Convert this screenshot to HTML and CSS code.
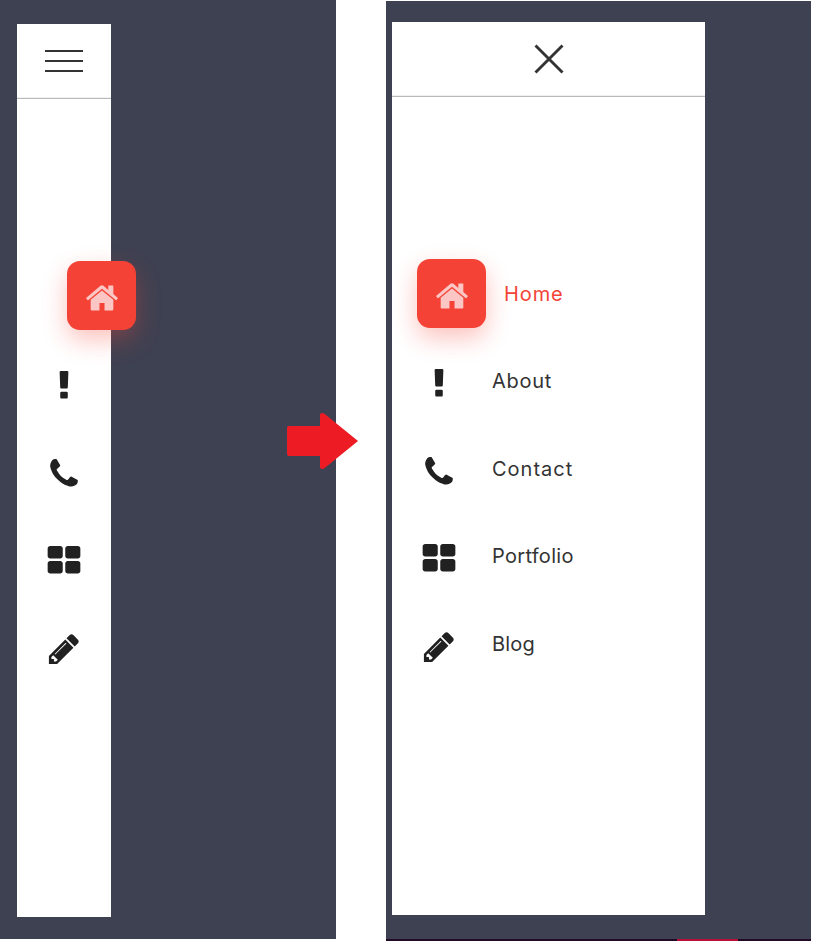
FILE: index.html
```html
<!DOCTYPE html>
<html lang="en">
<head>
<meta charset="utf-8">
<title>Sidebar menu</title>
<link rel="stylesheet" href="styles.css">
</head>
<body>
<svg class="sprite" aria-hidden="true">
  <symbol id="home" viewBox="0 0 1792 1792"><path d="M1472 992v480q0 26-19 45t-45 19h-384v-384h-256v384h-384q-26 0-45-19t-19-45v-480q0-1 .5-3t.5-3l575-474 575 474q1 2 1 6zm223-69l-62 74q-8 9-21 11h-3q-13 0-21-7l-692-577-692 577q-12 8-24 7-13-2-21-11l-62-74q-8-10-7-23.5t11-21.5l719-599q32-26 76-26t76 26l244 204v-195q0-14 9-23t23-9h192q14 0 23 9t9 23v408l219 182q10 8 11 21.5t-7 23.5z"/></symbol>
  <symbol id="about" viewBox="0 0 1792 1792"><path d="M1088 1248v224q0 26-19 45t-45 19h-256q-26 0-45-19t-19-45v-224q0-26 19-45t45-19h256q26 0 45 19t19 45zm30-1056l-28 768q-1 26-20.5 45t-45.5 19h-256q-26 0-45.5-19t-20.5-45l-28-768q-1-26 17.5-45t44.5-19h320q26 0 44.5 19t17.5 45z"/></symbol>
  <symbol id="phone" viewBox="0 0 1792 1792"><path d="M1600 1240q0 27-10 70.5t-21 68.5q-21 50-122 106-94 51-186 51-27 0-53-3.5t-57.5-12.5-47-14.5-55.5-20.5-49-18q-98-35-175-83-127-79-264-216t-216-264q-48-77-83-175-3-9-18-49t-20.5-55.5-14.5-47-12.5-57.5-3.5-53q0-92 51-186 56-101 106-122 25-11 68.5-21t70.5-10q14 0 21 3 18 6 53 76 11 19 30 54t35 63.5 31 53.5q3 4 17.5 25t21.5 35.5 7 28.5q0 20-28.5 50t-62 55-62 53-28.5 46q0 9 5 22.5t8.5 20.5 14 24 11.5 19q76 137 174 235t235 174q2 1 19 11.5t24 14 20.5 8.5 22.5 5q18 0 46-28.5t53-62 55-62 50-28.5q14 0 28.5 7t35.5 21.5 25 17.5q25 15 53.5 31t63.5 35 54 30q70 35 76 53 3 7 3 21z"/></symbol>
  <symbol id="grid" viewBox="0 0 1792 1792"><path d="M832 1024v384q0 52-38 90t-90 38h-512q-52 0-90-38t-38-90v-384q0-52 38-90t90-38h512q52 0 90 38t38 90zm0-768v384q0 52-38 90t-90 38h-512q-52 0-90-38t-38-90v-384q0-52 38-90t90-38h512q52 0 90 38t38 90zm896 768v384q0 52-38 90t-90 38h-512q-52 0-90-38t-38-90v-384q0-52 38-90t90-38h512q52 0 90 38t38 90zm0-768v384q0 52-38 90t-90 38h-512q-52 0-90-38t-38-90v-384q0-52 38-90t90-38h512q52 0 90 38t38 90z"/></symbol>
  <symbol id="pencil" viewBox="0 0 1792 1792"><path d="M491 1536l91-91-235-235-91 91v107h128v128h107zm523-928q0-22-22-22-10 0-17 7l-542 542q-7 7-7 17 0 22 22 22 10 0 17-7l542-542q7-7 7-17zm-54-192l416 416-832 832h-416v-416zm683 96q0 53-37 90l-166 166-416-416 166-165q36-38 90-38 53 0 91 38l235 234q37 39 37 91z"/></symbol>
</svg>
<main class="board">
  <section class="stage stage-closed">
    <nav class="panel narrow">
      <div class="head"><div class="burger"><span></span><span></span><span></span></div></div>
      <ul class="menu">
        <li class="active"><span class="cell"><span class="tile"><svg class="icon"><use href="#home"/></svg></span></span></li>
        <li><span class="cell"><svg class="icon"><use href="#about"/></svg></span></li>
        <li><span class="cell"><svg class="icon"><use href="#phone"/></svg></span></li>
        <li><span class="cell"><svg class="icon"><use href="#grid"/></svg></span></li>
        <li><span class="cell"><svg class="icon"><use href="#pencil"/></svg></span></li>
      </ul>
    </nav>
  </section>
  <section class="stage stage-open">
    <nav class="panel wide">
      <div class="head"><svg class="close" viewBox="0 0 30 30"><path d="M1.5 1.5l27 27M28.5 1.5l-27 27"/></svg></div>
      <ul class="menu">
        <li class="active"><span class="cell"><span class="tile"><svg class="icon"><use href="#home"/></svg></span></span><span class="label home">Home</span></li>
        <li><span class="cell"><svg class="icon"><use href="#about"/></svg></span><span class="label about">About</span></li>
        <li><span class="cell"><svg class="icon"><use href="#phone"/></svg></span><span class="label contact">Contact</span></li>
        <li><span class="cell"><svg class="icon"><use href="#grid"/></svg></span><span class="label portfolio">Portfolio</span></li>
        <li><span class="cell"><svg class="icon"><use href="#pencil"/></svg></span><span class="label blog">Blog</span></li>
      </ul>
    </nav>
    <div class="strip"><span></span></div>
  </section>
  <svg class="arrow" viewBox="0 0 72 58"><path d="M2 14h31V3q0-2 2-2 2 0 4 2L71 29 39 55q-2 2-4 2-2 0-2-2V44H2q-2 0-2-2V16q0-2 2-2z"/></svg>
</main>
</body>
</html>
```
FILE: styles.css
```css
* { box-sizing: border-box; }
body { margin: 0; background: #fff; font-family: Inter, "Liberation Sans", sans-serif; }
.sprite { display: none; }
.board { position: relative; display: flex; gap: 50px; width: 813px; height: 941px; overflow: hidden; }
.stage { background: #3e4152; }
.stage-closed { width: 336px; height: 939px; padding: 24px 0 0 17px; }
.stage-open { width: 425px; height: 940px; margin-top: 1px; padding: 21px 0 0 6px; display: flex; flex-direction: column; justify-content: space-between; }
.panel { height: 893px; background: #fff; }
.narrow { width: 94px; }
.wide { width: 313px; }
.head { height: 75px; display: flex; align-items: center; justify-content: center; border-bottom: 1px solid #bababa; box-shadow: inset 0 -1px #f0f0f0; }
.burger { width: 38px; display: grid; gap: 8px; }
.burger span { height: 2px; background: #333; }
.close { width: 30px; height: 30px; fill: none; stroke: #333; stroke-width: 2.9; }
.menu { list-style: none; margin: 0; padding: 156px 0 0; }
.menu li { height: 87.5px; display: flex; align-items: center; }
.cell { flex: none; width: 94px; display: flex; justify-content: center; }
.icon { display: block; width: 36px; height: 36px; padding: .4px; fill: #212121; }
.tile { flex: none; width: 69px; height: 69px; padding-top: 6px; margin-bottom: 7px; display: flex; align-items: center; justify-content: center; border-radius: 13px; background: #f44336; box-shadow: 0 10px 25px rgba(244, 67, 54, .32); }
.tile .icon { fill: #fbc6c3; }
.narrow .active .cell { padding-left: 75px; }
.wide .active .cell { padding-left: 25px; }
.label { font-size: 20px; font-weight: 400; line-height: 30px; color: #333; margin: 0 0 6px 6px; }
.wide .label.home { margin: 0 0 5px 18px; color: #f44336; letter-spacing: .9px; }
.about { letter-spacing: .7px; }
.contact { letter-spacing: 1px; }
.portfolio { letter-spacing: .3px; }
.blog { letter-spacing: .2px; }
.strip { height: 2px; margin-left: -6px; padding-left: 291px; background: #210a26; }
.strip span { display: block; width: 61px; height: 2px; background: #b80f38; }
.arrow { position: absolute; left: 287px; top: 412px; width: 72px; height: 58px; fill: #ed1c24; }
```
